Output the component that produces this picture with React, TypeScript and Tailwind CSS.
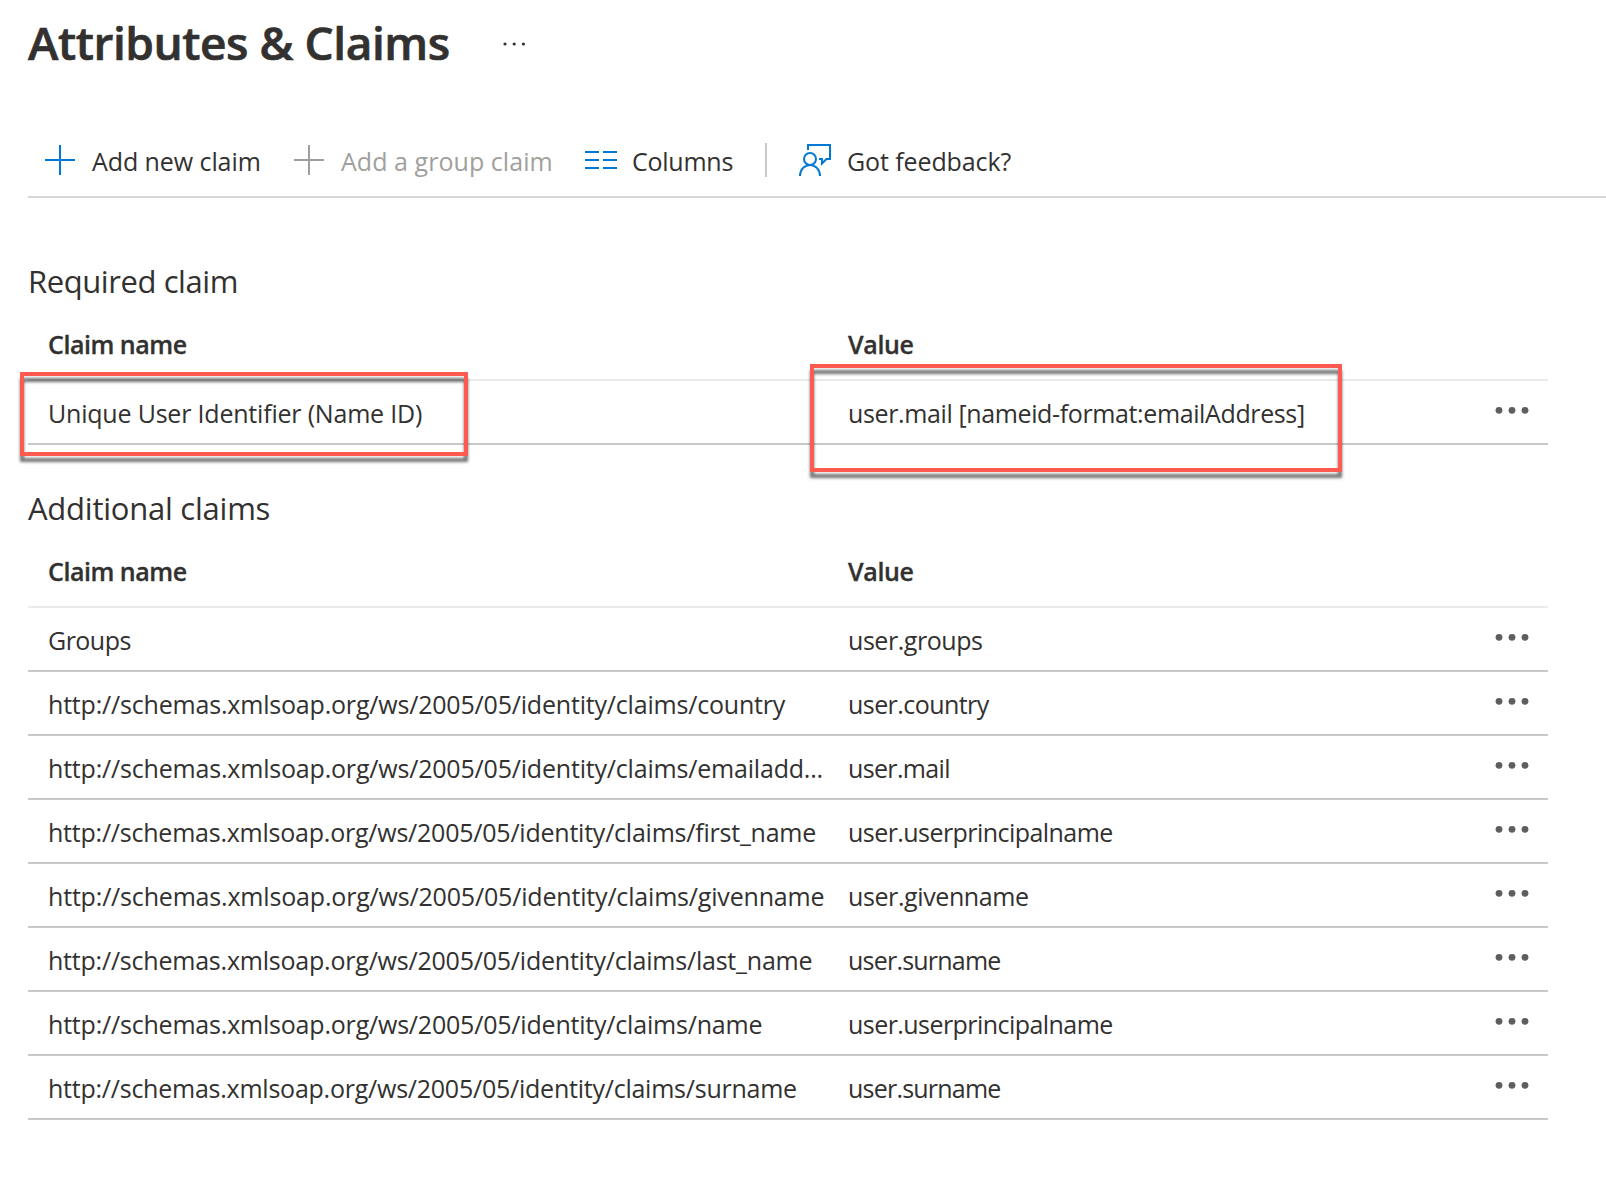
import React from "react";

type Claim = { name: string; value: string; nameClass: string; valueClass: string };

const SCHEMA = "http://schemas.xmlsoap.org/ws/2005/05/identity/claims/";

const requiredClaims: Claim[] = [
  {
    name: "Unique User Identifier (Name ID)",
    value: "user.mail [nameid-format:emailAddress]",
    nameClass: "tracking-[-0.2px]",
    valueClass: "tracking-[-0.376px]",
  },
];

const additionalClaims: Claim[] = [
  { name: "Groups", value: "user.groups", nameClass: "tracking-[-0.52px]", valueClass: "tracking-[-0.453px]" },
  { name: SCHEMA + "country", value: "user.country", nameClass: "tracking-[-0.19px]", valueClass: "tracking-[-0.56px]" },
  { name: SCHEMA + "emailadd...", value: "user.mail", nameClass: "tracking-[-0.19px]", valueClass: "tracking-[-0.65px]" },
  { name: SCHEMA + "first_name", value: "user.userprincipalname", nameClass: "tracking-[-0.226px]", valueClass: "tracking-[-0.551px]" },
  { name: SCHEMA + "givenname", value: "user.givenname", nameClass: "tracking-[-0.178px]", valueClass: "tracking-[-0.398px]" },
  { name: SCHEMA + "last_name", value: "user.surname", nameClass: "tracking-[-0.214px]", valueClass: "tracking-[-0.78px]" },
  { name: SCHEMA + "name", value: "user.userprincipalname", nameClass: "tracking-[-0.2px]", valueClass: "tracking-[-0.551px]" },
  { name: SCHEMA + "surname", value: "user.surname", nameClass: "tracking-[-0.236px]", valueClass: "tracking-[-0.78px]" },
];

function PlusIcon({ className }: { className: string }) {
  return (
    <svg width="30" height="30" viewBox="0 0 30 30" className={className} fill="currentColor" shapeRendering="crispEdges">
      <rect x="14" y="0" width="2" height="30" />
      <rect x="0" y="14" width="30" height="2" />
    </svg>
  );
}

function ColumnsIcon() {
  return (
    <svg width="32" height="18" viewBox="0 0 32 18" fill="#0078d4" shapeRendering="crispEdges">
      {[0, 8, 16].map((y) => (
        <React.Fragment key={y}>
          <rect x="0" y={y} width="14" height="2" />
          <rect x="18" y={y} width="14" height="2" />
        </React.Fragment>
      ))}
    </svg>
  );
}

function FeedbackIcon() {
  return (
    <svg width="32" height="32" viewBox="0 0 32 32" fill="none" stroke="#0078d4" strokeWidth="2">
      <path d="M9 6V1h22v14h-3.5l-4.5 4.5V15h-3" />
      <circle cx="11" cy="15" r="6" />
      <path d="M1 32c0-6.2 4.4-11 10-11s10 4.8 10 11" />
    </svg>
  );
}

function MoreIcon() {
  return (
    <svg width="34" height="8" viewBox="0 0 34 8" fill="#605e5c">
      <circle cx="4" cy="4.3" r="3.4" />
      <circle cx="17" cy="4.3" r="3.4" />
      <circle cx="30" cy="4.3" r="3.4" />
    </svg>
  );
}

function ClaimsTable({ title, titleClass, claims, highlighted }: { title: string; titleClass: string; claims: Claim[]; highlighted?: boolean }) {
  return (
    <section className="w-[1520px]">
      <h2 className={`h-[42px] text-[31px] leading-[42px] font-normal ${titleClass}`}>{title}</h2>
      <div className="mt-[23px] flex h-[56px] border-b-2 border-[#ebebeb] pl-5 text-[25px] leading-[38px] font-semibold [-webkit-text-stroke:0.3px_#323130]">
        <div className="w-[800px] tracking-[-0.463px]">Claim name</div>
        <div className="tracking-[-0.35px]">Value</div>
      </div>
      {claims.map((c) => (
        <div key={c.name} className="relative flex h-16 items-center border-b-2 border-[#c8c8c8] pr-[19px] pl-5 text-[25px]">
          <div className={`w-[800px] pt-px leading-[36px] whitespace-nowrap ${c.nameClass}`}>{c.name}</div>
          <div className={`flex-1 pt-px leading-[36px] whitespace-nowrap ${c.valueClass}`}>{c.value}</div>
          <div className="pb-1">
            <MoreIcon />
          </div>
          {highlighted && (
            <>
              <div className="absolute top-[-9px] left-[-8px] h-[84px] w-[448px] border-4 border-[#ff5a4f] [filter:drop-shadow(0_6px_1.5px_rgba(0,0,0,0.55))]" />
              <div className="absolute top-[-17px] left-[782px] h-[108px] w-[532px] border-4 border-[#ff5a4f] [filter:drop-shadow(0_6px_1.5px_rgba(0,0,0,0.55))]" />
            </>
          )}
        </div>
      ))}
    </section>
  );
}

export default function App() {
  return (
    <div className="h-[1186px] w-[1606px] overflow-hidden bg-white pl-7 font-['Open_Sans',sans-serif] text-[#323130]">
      <header className="flex h-[84px] items-center">
        <h1 className="w-[422px] text-[46px] leading-[60px] font-semibold tracking-[-0.44px] whitespace-nowrap [-webkit-text-stroke:0.7px_#323130]">Attributes &amp; Claims</h1>
        <svg width="24" height="6" viewBox="0 0 24 6" fill="#323130" className="mt-[4px] ml-[53px]">
          <circle cx="2" cy="3" r="1.6" />
          <circle cx="11.2" cy="3" r="1.6" />
          <circle cx="20.4" cy="3" r="1.6" />
        </svg>
      </header>

      <div className="mt-[36px] flex h-[78px] items-center border-b-2 border-[#d6d6d6] pt-[2px] text-[25px] leading-[36px]">
        <div className="ml-[17px] flex w-[249px] items-center">
          <PlusIcon className="mt-[2px] text-[#0078d4]" />
          <span className="mt-[3px] ml-[17px] tracking-[-0.08px]">Add new claim</span>
        </div>
        <div className="flex w-[291px] items-center text-[#a19f9d]">
          <PlusIcon className="mt-[2px] text-[#a19f9d]" />
          <span className="mt-[3px] ml-[17px] tracking-[0.05px]">Add a group claim</span>
        </div>
        <div className="flex w-[180px] items-center">
          <span className="mt-[2px]">
            <ColumnsIcon />
          </span>
          <span className="mt-[3px] ml-[15px] tracking-[-0.25px]">Columns</span>
        </div>
        <div className="mt-[2px] h-[34px] w-[2px] bg-[#c8c8c8]" />
        <div className="ml-[32px] flex items-center">
          <span className="mt-[2px]">
            <FeedbackIcon />
          </span>
          <span className="mt-[3px] ml-[16px] tracking-[-0.1px]">Got feedback?</span>
        </div>
      </div>

      <div className="mt-[62px]">
        <ClaimsTable title="Required claim" titleClass="tracking-[-0.42px]" claims={requiredClaims} highlighted />
      </div>
      <div className="mt-[42px]">
        <ClaimsTable title="Additional claims" titleClass="tracking-[-0.24px]" claims={additionalClaims} />
      </div>
    </div>
  );
}
